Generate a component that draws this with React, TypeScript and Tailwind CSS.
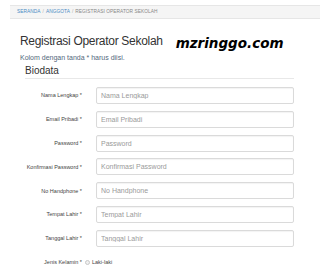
import React from "react";

const fields = [
  "Nama Lengkap",
  "Email Pribadi",
  "Password",
  "Konfirmasi Password",
  "No Handphone",
  "Tempat Lahir",
  "Tanggal Lahir",
];

export default function App() {
  return (
    <div
      className="w-[320px] h-[268px] overflow-hidden bg-white text-[#333]"
      style={{ fontFamily: '"Liberation Sans", Arial, sans-serif' }}
    >
      <div className="ml-[10px] mt-[5px] h-[14px] flex items-center pl-[7px] bg-[#f5f5f5] border-y border-[#e6e6e6] text-[4.8px] tracking-[0.05px] uppercase whitespace-nowrap">
        <span className="text-[#4a8bc4]">Seranda</span>
        <span className="text-[#aaa] mx-[2px]">/</span>
        <span className="text-[#4a8bc4]">Anggota</span>
        <span className="text-[#aaa] mx-[2px]">/</span>
        <span className="text-[#888]">Registrasi Operator Sekolah</span>
      </div>

      <div className="mt-[15px] pl-[20px] flex items-start whitespace-nowrap">
        <div className="text-[12px] leading-[14px] tracking-[-0.3px] text-[#333]">
          Registrasi Operator Sekolah
        </div>
        <div
          className="ml-[13px] mt-[1px] text-[13.5px] leading-[16px] font-bold italic text-black"
          style={{ fontFamily: '"DejaVu Sans", Verdana, sans-serif' }}
        >
          mzringgo.com
        </div>
      </div>

      <div className="mt-[1.5px] pl-[20px] text-[7px] leading-[9px] text-[#52677d] whitespace-nowrap">
        Kolom dengan tanda * harus diisi.
      </div>

      <div className="mt-[3px] ml-[25px] w-[269px] pb-[1.5px] border-b border-[#e8e8e8] text-[10px] leading-[12px] text-[#333]">
        Biodata
      </div>

      <div className="mt-[8px] flex flex-col gap-[6.8px]">
        {fields.map((f) => (
          <div key={f} className="flex items-center h-[17px]">
            <div className="w-[82px] text-right text-[5.5px] text-[#444] whitespace-nowrap">
              {f} *
            </div>
            <input
              type={f.includes("Password") ? "password" : "text"}
              placeholder={f}
              className="ml-[14px] w-[198px] h-[17px] pl-[4px] border border-[#dadada] rounded-[2px] bg-white text-[7px] text-[#555] placeholder:text-[#9a9a9a] shadow-[inset_0_1px_1px_rgba(0,0,0,0.05)] outline-none"
              style={{ fontFamily: '"Liberation Sans", Arial, sans-serif' }}
            />
          </div>
        ))}
        <div className="flex items-center h-[17px]">
          <div className="w-[82px] text-right text-[5.5px] text-[#444] whitespace-nowrap">
            Jenis Kelamin *
          </div>
          <span className="ml-[3px] w-[5px] h-[5px] rounded-full border border-[#c8c8c8] bg-[#f0f0f0]" />
          <span className="ml-[2px] text-[5.5px] text-[#444]">Laki-laki</span>
        </div>
      </div>
    </div>
  );
}
